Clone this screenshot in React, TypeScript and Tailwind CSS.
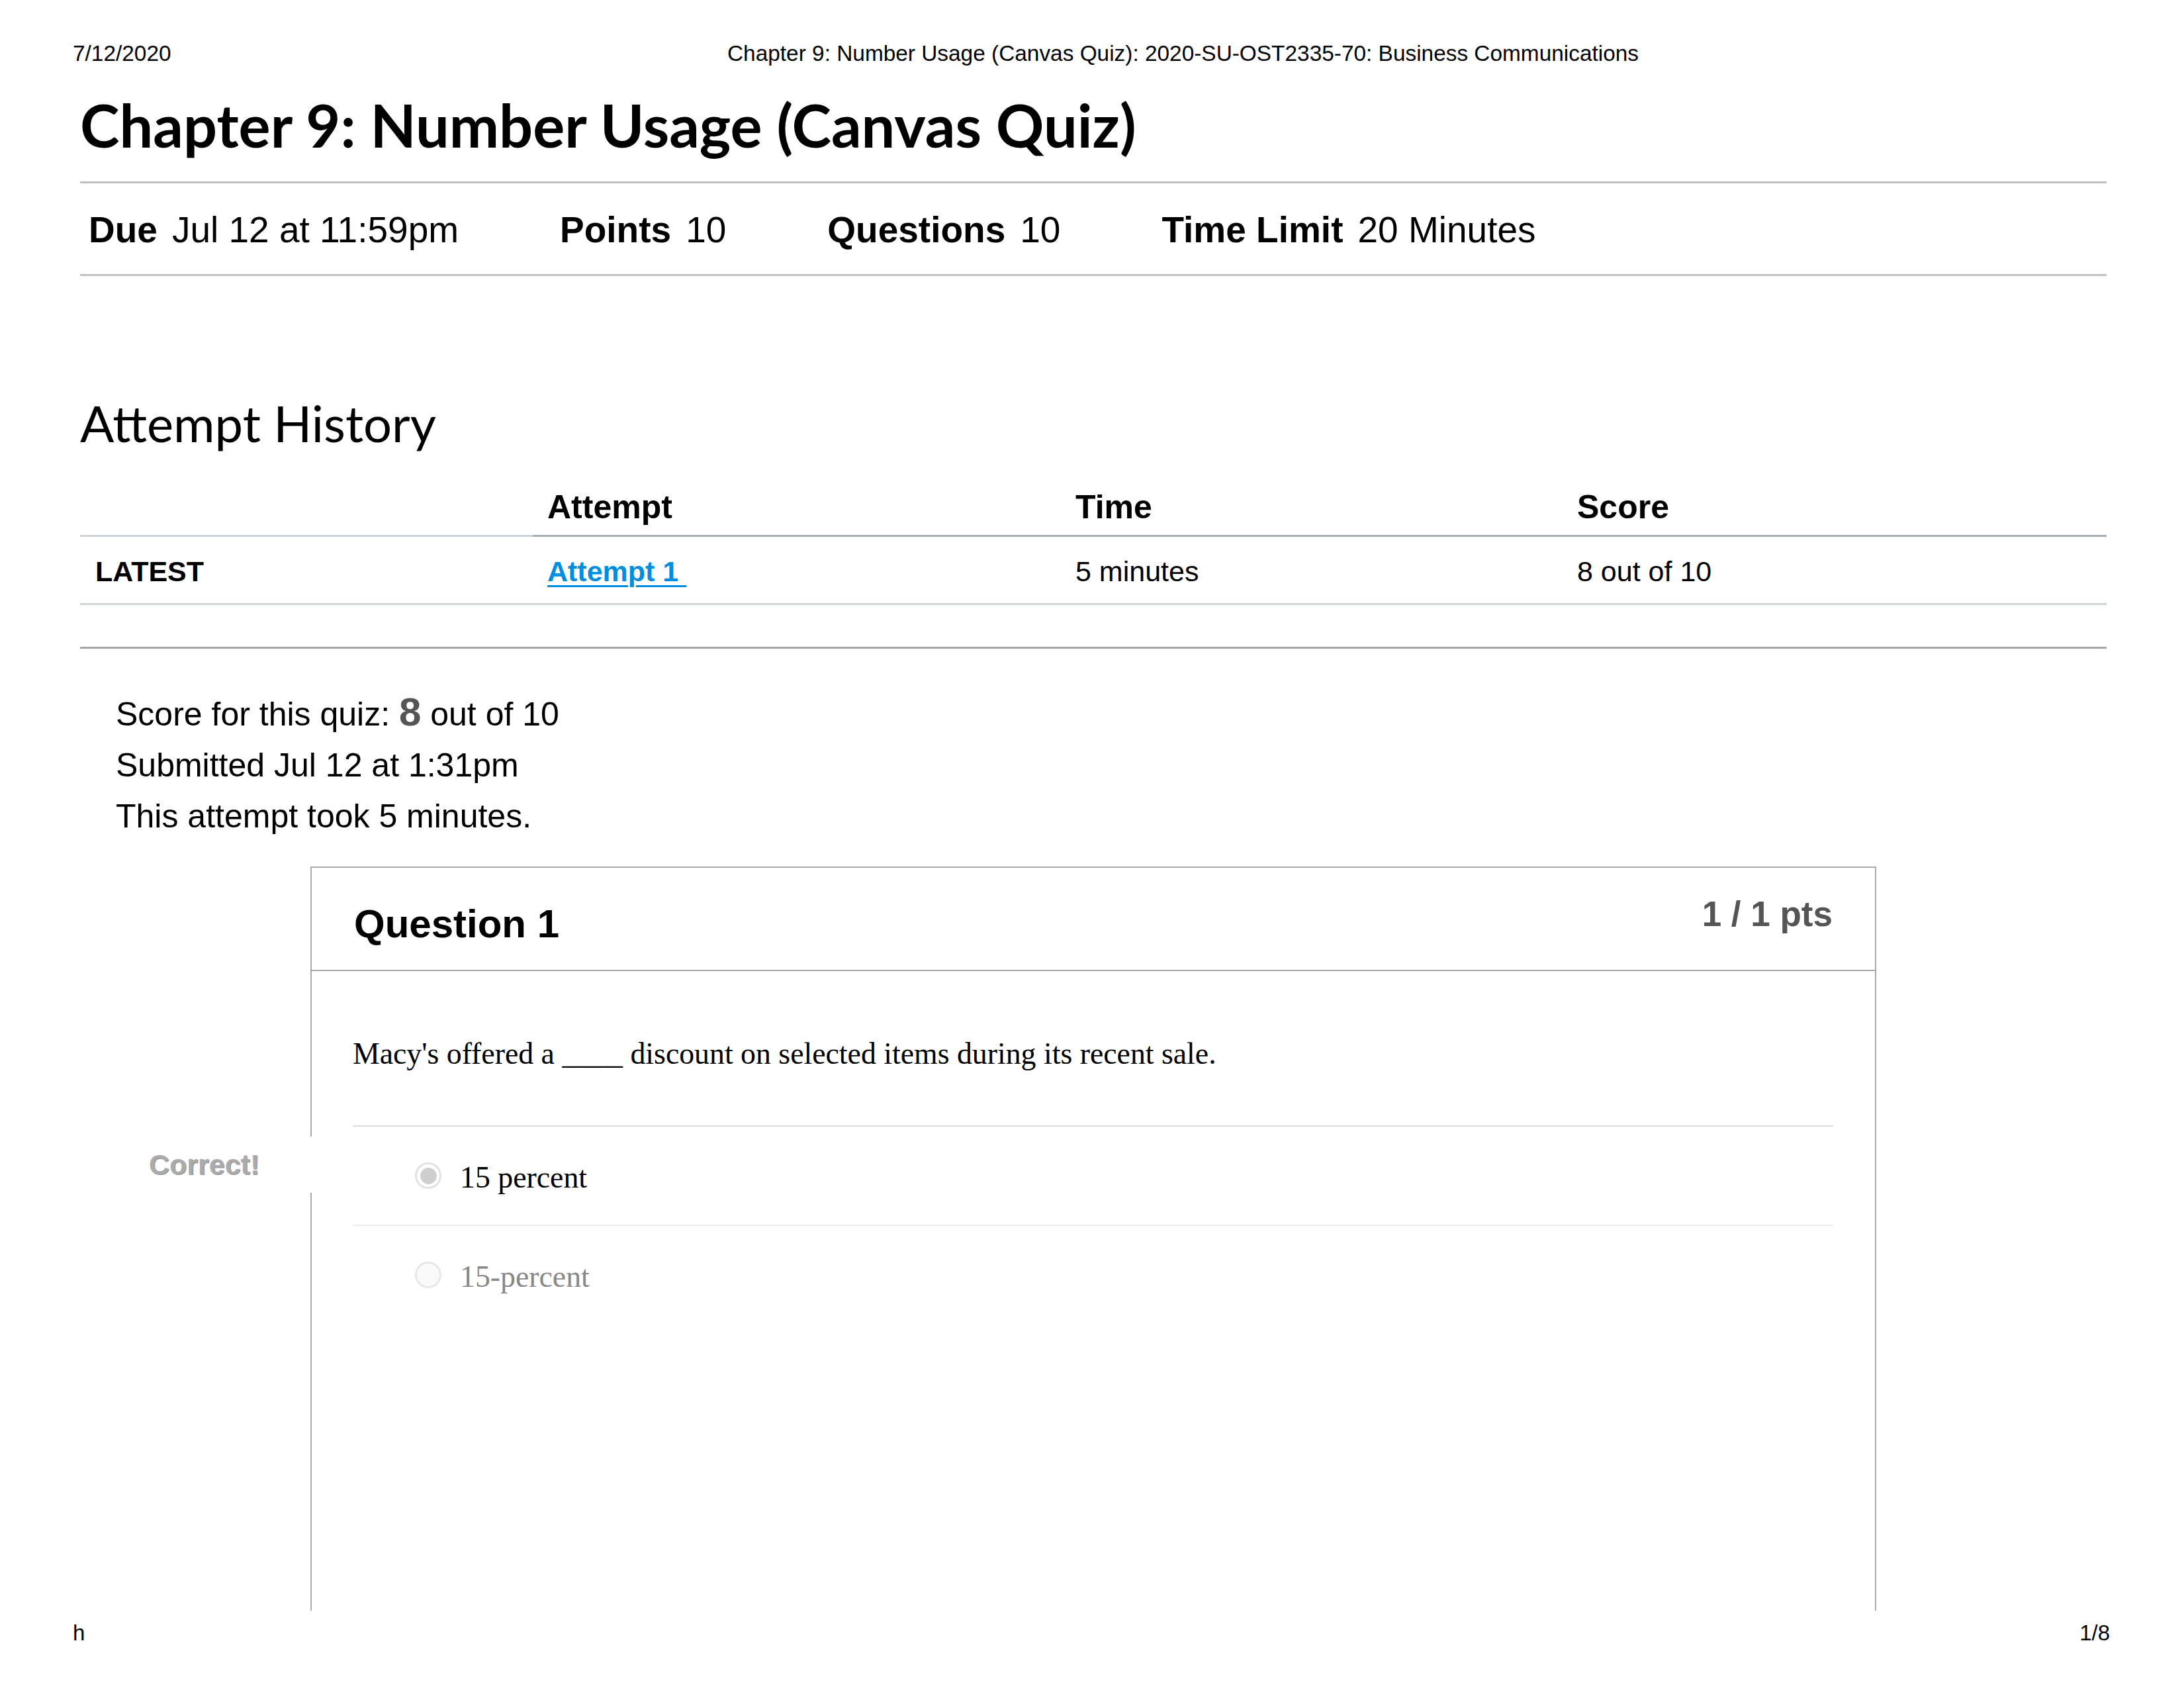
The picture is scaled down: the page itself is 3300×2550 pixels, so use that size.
import React from "react";

export default function App() {
  return (
    <div className="relative flex h-[2550px] w-[3300px] flex-col overflow-hidden bg-white font-['Liberation_Sans',Arial,sans-serif] text-black">
      {/* print header */}
      <div className="mt-[61px] flex h-[40px] px-[110px] text-[33.4px] leading-[40px]">
        <span className="w-[989px]">7/12/2020</span>
        <span>Chapter 9: Number Usage (Canvas Quiz): 2020-SU-OST2335-70: Business Communications</span>
      </div>

      <main className="ml-[121px] flex w-[3062px] flex-1 flex-col">
        <h1 className="mt-[33px] font-['Lato',sans-serif] text-[90px] font-bold leading-[108px]">
          Chapter 9: Number Usage (Canvas Quiz)
        </h1>

        <div className="mt-[32px] border-y-[3px] border-[#c0c0c0] pb-[35px] pl-[13px] pt-[39px]">
          <div className="flex text-[55px] leading-[63px]">
            <div className="mr-[153px] flex gap-[22px]">
              <span className="font-bold">Due</span>
              <span>Jul 12 at 11:59pm</span>
            </div>
            <div className="mr-[153px] flex gap-[22px]">
              <span className="font-bold">Points</span>
              <span>10</span>
            </div>
            <div className="mr-[153px] flex gap-[22px]">
              <span className="font-bold">Questions</span>
              <span>10</span>
            </div>
            <div className="flex gap-[22px]">
              <span className="font-bold">Time Limit</span>
              <span>20 Minutes</span>
            </div>
          </div>
        </div>

        <h2 className="mt-[176px] font-['Lato',sans-serif] text-[76px] font-normal leading-[91px]">
          Attempt History
        </h2>

        <div className="mt-[53px] grid grid-cols-[684px_798px_758px_1fr]">
          <div className="border-b-[3px] border-[#d0d5d8] pb-[13px] pl-[23px] leading-[58px]">&nbsp;</div>
          <div className="border-b-[3px] border-[#a7aeb3] pb-[13px] pl-[22px] text-[50px] font-bold leading-[58px]">Attempt</div>
          <div className="border-b-[3px] border-[#a7aeb3] pb-[13px] pl-[22px] text-[50px] font-bold leading-[58px]">Time</div>
          <div className="border-b-[3px] border-[#a7aeb3] pb-[13px] pl-[22px] text-[50px] font-bold leading-[58px]">Score</div>

          <div className="border-b-[3px] border-[#d0d5d8] pb-[23px] pl-[23px] pt-[27px] text-[43px] font-bold leading-[50px]">LATEST</div>
          <div className="border-b-[3px] border-[#d0d5d8] pb-[23px] pl-[22px] pt-[27px] text-[43px] leading-[50px]">
            <a className="font-bold text-[#008ee2] underline decoration-[3px] underline-offset-[6px]" href="#">Attempt 1&nbsp;</a>
          </div>
          <div className="border-b-[3px] border-[#d0d5d8] pb-[23px] pl-[22px] pt-[27px] text-[43px] leading-[50px]">5 minutes</div>
          <div className="border-b-[3px] border-[#d0d5d8] pb-[23px] pl-[22px] pt-[27px] text-[43px] leading-[50px]">8 out of 10</div>
        </div>

        <div className="mt-[63px] border-t-[3px] border-[#a5a5a5]" />

        <div className="mt-[61px] pl-[54px] text-[50px] leading-[77px]">
          <div>
            Score for this quiz: <span className="text-[60px] font-bold leading-none text-[#555555]">8</span> out of 10
          </div>
          <div>Submitted Jul 12 at 1:31pm</div>
          <div>This attempt took 5 minutes.</div>
        </div>

        <div className="relative ml-[348px] mt-[37px] h-[1124px] w-[2366px] border-x-2 border-t-2 border-[#aaaaaa]">
          <div className="flex h-[156px] items-start justify-between border-b-2 border-[#aaaaaa] px-[64px]">
            <div className="mt-[50px] text-[60px] font-bold leading-[70px]">Question 1</div>
            <div className="mt-[40px] text-[53px] font-bold leading-[60px] text-[#555555]">1 / 1 pts</div>
          </div>

          <div className="px-[62px]">
            <p className="pt-[99px] font-['Liberation_Serif','Times_New_Roman',serif] text-[45.8px] leading-[52px]">
              Macy's offered a ____ discount on selected items during its recent sale.
            </p>

            <div className="mr-[1px] mt-[82px] font-['Liberation_Serif','Times_New_Roman',serif] text-[45.8px] leading-[52px]">
              <div className="flex h-[150px] items-center border-t-2 border-[#dddddd] pl-[94px]">
                <span className="flex h-[40px] w-[40px] items-center justify-center rounded-full border-[3px] border-[#e2e2e2] bg-white">
                  <span className="h-[25px] w-[25px] rounded-full bg-[#cfcfcf]" />
                </span>
                <span className="ml-[28px] mt-[6px]">15 percent</span>
              </div>
              <div className="flex h-[150px] items-center border-t-2 border-[#eeeeee] pl-[94px]">
                <span className="h-[40px] w-[40px] rounded-full border-[3px] border-[#e8e8e8] bg-[#fafafa]" />
                <span className="ml-[28px] mt-[6px] text-[#888888]">15-percent</span>
              </div>
            </div>
          </div>

          <div className="absolute left-[-262px] top-[406px] h-[85px] w-[266px] bg-white pl-[16px] text-[43px] font-bold leading-[85px] text-[#ababab] [text-shadow:1px_1px_0_#8f8f8f]">
            Correct!
          </div>
        </div>
      </main>

      <div className="flex h-[40px] justify-between pl-[110px] pr-[112px] text-[33px] leading-[40px]">
        <span>h</span>
        <span>1/8</span>
      </div>
      <div className="h-[63px]" />
    </div>
  );
}
